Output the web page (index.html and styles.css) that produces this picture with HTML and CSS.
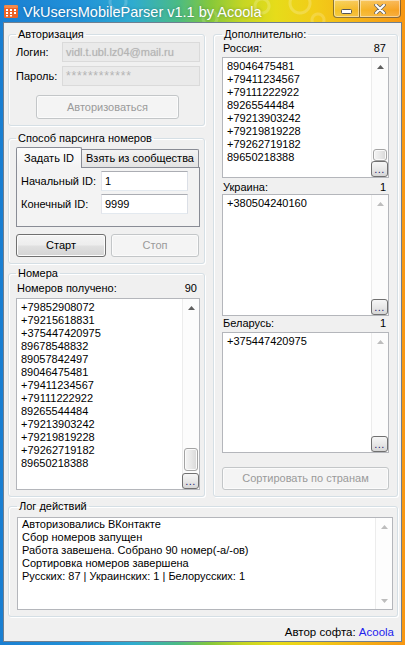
FILE: index.html
```html
<!DOCTYPE html>
<html lang="ru">
<head>
<meta charset="utf-8">
<title>VkUsersMobileParser v1.1 by Acoola</title>
<link rel="stylesheet" href="styles.css">
</head>
<body>
<div class="window">
  <div class="titlebar">
    <svg class="app-icon" width="14" height="13" viewBox="0 0 14 13">
      <rect x="0" y="0" width="14" height="13" rx="1.5" fill="#ee6428"/>
      <rect x="0" y="0" width="14" height="3" rx="1.5" fill="#f58a4a"/>
      <g fill="#fff">
        <rect x="2" y="4" width="2" height="2"/><rect x="6" y="4" width="2" height="2"/><rect x="10" y="4" width="2" height="2"/>
        <rect x="2" y="7" width="2" height="2"/><rect x="6" y="7" width="2" height="2"/><rect x="10" y="7" width="2" height="2"/>
        <rect x="2" y="10" width="2" height="1.5"/><rect x="6" y="10" width="2" height="1.5"/>
      </g>
    </svg>
    <span class="title">VkUsersMobileParser v1.1 by Acoola</span>
    <div class="caption-btns">
      <div class="cap-btn cap-min">
        <svg width="11" height="5" viewBox="0 0 11 5"><rect x="0.5" y="0.5" width="10" height="4" rx="1" fill="#fff" stroke="#555" stroke-width="1"/></svg>
      </div>
      <div class="cap-btn cap-close">
        <svg width="12" height="10" viewBox="0 0 12 10"><path d="M2 1 L10 9 M10 1 L2 9" stroke="#666" stroke-width="3.6" stroke-linecap="round"/><path d="M2 1 L10 9 M10 1 L2 9" stroke="#fff" stroke-width="2" stroke-linecap="round"/></svg>
      </div>
    </div>
  </div>

  <div class="client">
    <div class="columns">
      <div class="col-left">
        <fieldset class="group g-auth">
          <legend>Авторизация</legend>
          <div class="auth-row">
            <span class="auth-label">Логин:</span>
            <div class="textbox disabled login-text">vidl.t.ubl.lz04@mail.ru</div>
          </div>
          <div class="auth-row">
            <span class="auth-label">Пароль:</span>
            <div class="textbox disabled pass-text">************</div>
          </div>
          <div class="btn disabled btn-auth">Авторизоваться</div>
        </fieldset>

        <fieldset class="group g-method">
          <legend>Способ парсинга номеров</legend>
          <div class="tabstrip">
            <div class="tab active tab-first">Задать ID</div>
            <div class="tab tab-second">Взять из сообщества</div>
          </div>
          <div class="tabpanel">
            <div class="id-row">
              <span class="id-label">Начальный ID:</span>
              <div class="textbox">1</div>
            </div>
            <div class="id-row">
              <span class="id-label">Конечный ID:</span>
              <div class="textbox">9999</div>
            </div>
          </div>
          <div class="btn-row">
            <div class="btn">Старт</div>
            <div class="btn disabled">Стоп</div>
          </div>
        </fieldset>

        <fieldset class="group g-numbers">
          <legend>Номера</legend>
          <div class="count-row"><span>Номеров получено:</span><span>90</span></div>
          <div class="listbox list-numbers">
            <div class="items">
              <div>+79852908072</div>
              <div>+79215618831</div>
              <div>+375447420975</div>
              <div>89678548832</div>
              <div>89057842497</div>
              <div>89046475481</div>
              <div>+79411234567</div>
              <div>+79111222922</div>
              <div>89265544484</div>
              <div>+79213903242</div>
              <div>+79219819228</div>
              <div>+79262719182</div>
              <div>89650218388</div>
            </div>
            <div class="vscroll">
              <div class="arrow up"><svg width="7" height="4" viewBox="0 0 7 4"><path d="M0 4 L3.5 0 L7 4 Z"/></svg></div>
              <div class="track"><div class="thumb thumb-tall"></div></div>
              <div class="more-btn">...</div>
            </div>
          </div>
        </fieldset>
      </div>

      <fieldset class="group g-extra">
        <legend>Дополнительно:</legend>
        <div class="count-row first"><span>Россия:</span><span>87</span></div>
        <div class="listbox list-ru">
          <div class="items">
            <div>89046475481</div>
            <div>+79411234567</div>
            <div>+79111222922</div>
            <div>89265544484</div>
            <div>+79213903242</div>
            <div>+79219819228</div>
            <div>+79262719182</div>
            <div>89650218388</div>
          </div>
          <div class="vscroll">
            <div class="arrow up"><svg width="7" height="4" viewBox="0 0 7 4"><path d="M0 4 L3.5 0 L7 4 Z"/></svg></div>
            <div class="track"><div class="thumb thumb-short"></div></div>
            <div class="more-btn">...</div>
          </div>
        </div>
        <div class="count-row second"><span>Украина:</span><span>1</span></div>
        <div class="listbox list-ua">
          <div class="items">
            <div>+380504240160</div>
          </div>
          <div class="vscroll">
            <div class="arrow up off"><svg width="7" height="4" viewBox="0 0 7 4"><path d="M0 4 L3.5 0 L7 4 Z"/></svg></div>
            <div class="track"></div>
            <div class="more-btn">...</div>
          </div>
        </div>
        <div class="count-row third"><span>Беларусь:</span><span>1</span></div>
        <div class="listbox list-by">
          <div class="items">
            <div>+375447420975</div>
          </div>
          <div class="vscroll">
            <div class="arrow up off"><svg width="7" height="4" viewBox="0 0 7 4"><path d="M0 4 L3.5 0 L7 4 Z"/></svg></div>
            <div class="track"></div>
            <div class="more-btn">...</div>
          </div>
        </div>
        <div class="btn disabled btn-sort">Сортировать по странам</div>
      </fieldset>
    </div>

    <fieldset class="group g-log">
      <legend>Лог действий</legend>
      <div class="listbox log">
        <div class="items">
          <div>Авторизовались ВКонтакте</div>
          <div>Сбор номеров запущен</div>
          <div>Работа завешена. Собрано 90 номер(-а/-ов)</div>
          <div>Сортировка номеров завершена</div>
          <div>Русских: 87 | Украинских: 1 | Белорусских: 1</div>
        </div>
        <div class="vscroll">
          <div class="arrow up off"><svg width="7" height="4" viewBox="0 0 7 4"><path d="M0 4 L3.5 0 L7 4 Z"/></svg></div>
          <div class="track"></div>
          <div class="arrow down off"><svg width="7" height="4" viewBox="0 0 7 4"><path d="M0 0 L3.5 4 L7 0 Z"/></svg></div>
        </div>
      </div>
    </fieldset>

    <div class="footer">Автор софта: <span class="link">Acoola</span></div>
  </div>
</div>
</body>
</html>
```

FILE: styles.css
```css
* { box-sizing: border-box; }

html, body {
  margin: 0;
  padding: 0;
  width: 405px;
  height: 645px;
  overflow: hidden;
  background: #f0f0f0;
}

body {
  font-family: "Liberation Sans", Arial, sans-serif;
  font-size: 11px;
  line-height: 13px;
  color: #000;
}

.window {
  width: 405px;
  height: 645px;
  display: flex;
  flex-direction: column;
  background: linear-gradient(90deg, #1a7fd2 0%, #2192d8 20%, #2faccf 33%, #4bbb84 44%, #86c83a 52%, #c6d624 60%, #e6dc1a 68%, #f2cc18 78%, #f5ae16 90%, #f79612 100%);
}

/* ---------- title bar ---------- */
.titlebar {
  height: 22px;
  display: flex;
  align-items: flex-start;
  flex-shrink: 0;
  background-image:
    radial-gradient(circle at 118px 2px, transparent 0 6px, rgba(255,255,255,0.18) 7px 9px, transparent 10px),
    radial-gradient(circle at 210px 18px, transparent 0 5px, rgba(255,255,255,0.14) 6px 8px, transparent 9px),
    radial-gradient(circle at 262px 6px, transparent 0 5px, rgba(255,255,255,0.2) 6px 8px, transparent 9px),
    radial-gradient(circle at 300px 3px, transparent 0 8px, rgba(255,255,255,0.2) 9px 11px, transparent 12px),
    radial-gradient(circle at 318px 20px, transparent 0 4px, rgba(255,255,255,0.18) 5px 7px, transparent 8px),
    radial-gradient(ellipse at 60px 30px, rgba(255,255,255,0.12), transparent 60px);
}

.app-icon {
  margin: 5px 0 0 4px;
  flex-shrink: 0;
}

.title {
  margin-left: 5px;
  padding-top: 1px;
  font-size: 14.5px;
  line-height: 22px;
  color: #fff;
  white-space: nowrap;
  text-shadow: 0 0 3px rgba(0, 40, 80, 0.4);
}

.caption-btns {
  margin-left: auto;
  margin-right: 4px;
  display: flex;
  height: 18px;
}

.cap-btn {
  height: 18px;
  display: flex;
  align-items: center;
  justify-content: center;
  border: 1px solid rgba(30, 30, 30, 0.5);
  border-top: none;
  box-shadow: inset 0 0 0 1px rgba(255, 255, 255, 0.45);
  background: linear-gradient(rgba(255,255,255,0.32), rgba(255,255,255,0.08) 60%, rgba(255,255,255,0.2));
}

.cap-min {
  width: 27px;
  border-bottom-left-radius: 4px;
  padding-top: 5px;
}

.cap-close {
  width: 41px;
  border-left: none;
  border-bottom-right-radius: 4px;
}

/* ---------- client ---------- */
.client {
  margin: 0 3px 3px;
  height: 620px;
  border: 1px solid #6f7f90;
  background: #f0f0f0;
  padding: 5px 3px 0 4px;
  display: flex;
  flex-direction: column;
}

.columns {
  display: grid;
  grid-template-columns: 197px 185px;
  column-gap: 8px;
}

.col-left {
  display: flex;
  flex-direction: column;
}

.group {
  margin: 0;
  min-width: 0;
  border: 1px solid #d5dfe5;
  border-radius: 3px;
  box-shadow: inset 1px 1px 0 #fff, 1px 1px 0 #fff;
  padding: 0 4px 6px 7px;
}

.group legend {
  padding: 0 2px;
  line-height: 13px;
  font-size: 11px;
}

/* auth */
.g-auth { padding-top: 1px; }

.auth-row {
  display: flex;
  align-items: center;
  height: 20px;
}

.auth-row + .auth-row { margin-top: 4px; }

.auth-label { width: 46px; flex-shrink: 0; }

.textbox {
  height: 20px;
  background: #fff;
  border: 1px solid;
  border-color: #abadb3 #dbdfe6 #e3e9ef #e2e3ea;
  padding: 2px 3px 0;
  line-height: 14px;
  white-space: nowrap;
  overflow: hidden;
}

.auth-row .textbox { width: 139px; }

.textbox.disabled {
  background: #eaeaea;
  border-color: #dadada;
  color: #b4b4b4;
}

.login-text { text-shadow: 0 0 1px #c8c8c8; }

.pass-text {
  letter-spacing: 0.8px;
  font-size: 12px;
}

.btn {
  height: 23px;
  border: 1px solid #707070;
  border-radius: 3px;
  background: linear-gradient(#f4f4f4 0%, #ededed 48%, #e0e0e0 52%, #d4d4d4 100%);
  box-shadow: inset 0 0 0 1px #fcfcfc;
  display: flex;
  align-items: center;
  justify-content: center;
  white-space: nowrap;
}

.btn.disabled {
  border-color: #c3c6c8;
  background: #f4f4f4;
  box-shadow: inset 0 0 0 1px #fbfbfb;
  color: #9a9a9a;
}

.btn-auth {
  margin: 9px 0 0 20px;
  width: 143px;
  height: 24px;
}

/* parse method */
.g-method {
  margin-top: 6px;
  padding-top: 2px;
}

.tabstrip {
  height: 20px;
  display: flex;
  align-items: flex-end;
  position: relative;
  z-index: 1;
}

.tab {
  border: 1px solid #898c95;
  border-bottom: none;
  display: flex;
  align-items: center;
  justify-content: center;
  white-space: nowrap;
}

.tab-first {
  width: 66px;
  height: 21px;
  margin-bottom: -1px;
  background: linear-gradient(#fdfdfd, #f3f3f3);
  border-radius: 2px 2px 0 0;
}

.tab-second {
  width: 117px;
  height: 18px;
  border-left: none;
  background: linear-gradient(#f3f3f3, #e3e3e3);
  border-radius: 0 2px 0 0;
}

.tabpanel {
  height: 60px;
  border: 1px solid #898c95;
  background: #f3f3f3;
  padding: 3px 11px 0 4px;
}

.id-row {
  display: flex;
  align-items: center;
  height: 20px;
}

.id-row + .id-row { margin-top: 3px; }

.id-label { width: 80px; flex-shrink: 0; }

.id-row .textbox { width: 87px; }

.btn-row {
  margin-top: 7px;
  display: grid;
  grid-template-columns: 90px 88px;
  column-gap: 5px;
}

/* numbers */
.g-numbers {
  margin-top: 3px;
  padding-top: 2px;
}

.count-row {
  height: 13px;
  display: flex;
  justify-content: space-between;
  padding: 0 3px 0 1px;
}

.listbox {
  display: flex;
  background: #fff;
  border: 1px solid #b4b6bb;
}

.items {
  flex: 1;
  min-width: 0;
  padding: 2px 0 0 4px;
  white-space: nowrap;
  overflow: hidden;
}

.list-numbers {
  margin-top: 3px;
  height: 192px;
}

.vscroll {
  width: 17px;
  flex-shrink: 0;
  display: flex;
  flex-direction: column;
  background: #fcfcfc;
  border-left: 1px solid #ececec;
}

.arrow {
  height: 17px;
  display: flex;
  align-items: center;
  justify-content: center;
  flex-shrink: 0;
}

.arrow svg { fill: #5f5f5f; }
.arrow.off svg { fill: #bdbdbd; }

.track {
  flex: 1;
  display: flex;
  flex-direction: column;
  justify-content: flex-end;
  padding: 0 1px;
}

.thumb {
  border: 1px solid #a4a4a4;
  border-radius: 3px;
  background: linear-gradient(90deg, #f4f4f4, #e6e6e6 55%, #d8d8d8);
  box-shadow: inset 0 0 0 1px #fafafa;
}

.thumb-tall { height: 23px; margin-bottom: 2px; }
.thumb-short { height: 12px; }

.more-btn {
  height: 16px;
  margin-left: -1px;
  width: 17px;
  border: 1px solid #707070;
  border-radius: 3px;
  background: linear-gradient(#f6f6f6, #e8e8e8 50%, #d6d6d6);
  color: #1c2470;
  font-size: 11px;
  line-height: 14px;
  text-align: center;
  letter-spacing: 0.5px;
  flex-shrink: 0;
}

/* extra (right) */
.g-extra {
  padding: 0 8px 6px 8px;
}

.count-row.first { margin-top: 1px; }

.list-ru { margin-top: 2px; height: 121px; }

.count-row.second { margin-top: 3px; }

.list-ua { height: 122px; }

.count-row.third { margin-top: 1px; }

.list-by { margin-top: 2px; height: 121px; }

.btn-sort {
  margin-top: 14px;
  height: 23px;
}

/* log */
.g-log {
  margin-top: 3px;
  padding: 4px 4px 6px 8px;
}

.log {
  height: 93px;
}

.log .items { padding: 0 0 0 4px; }

.log .vscroll { background: #fdfdfd; }

/* footer */
.footer {
  margin-top: 9px;
  text-align: right;
  padding-right: 4px;
  font-size: 11.5px;
  line-height: 13px;
}

.link { color: #2222ee; }
```
